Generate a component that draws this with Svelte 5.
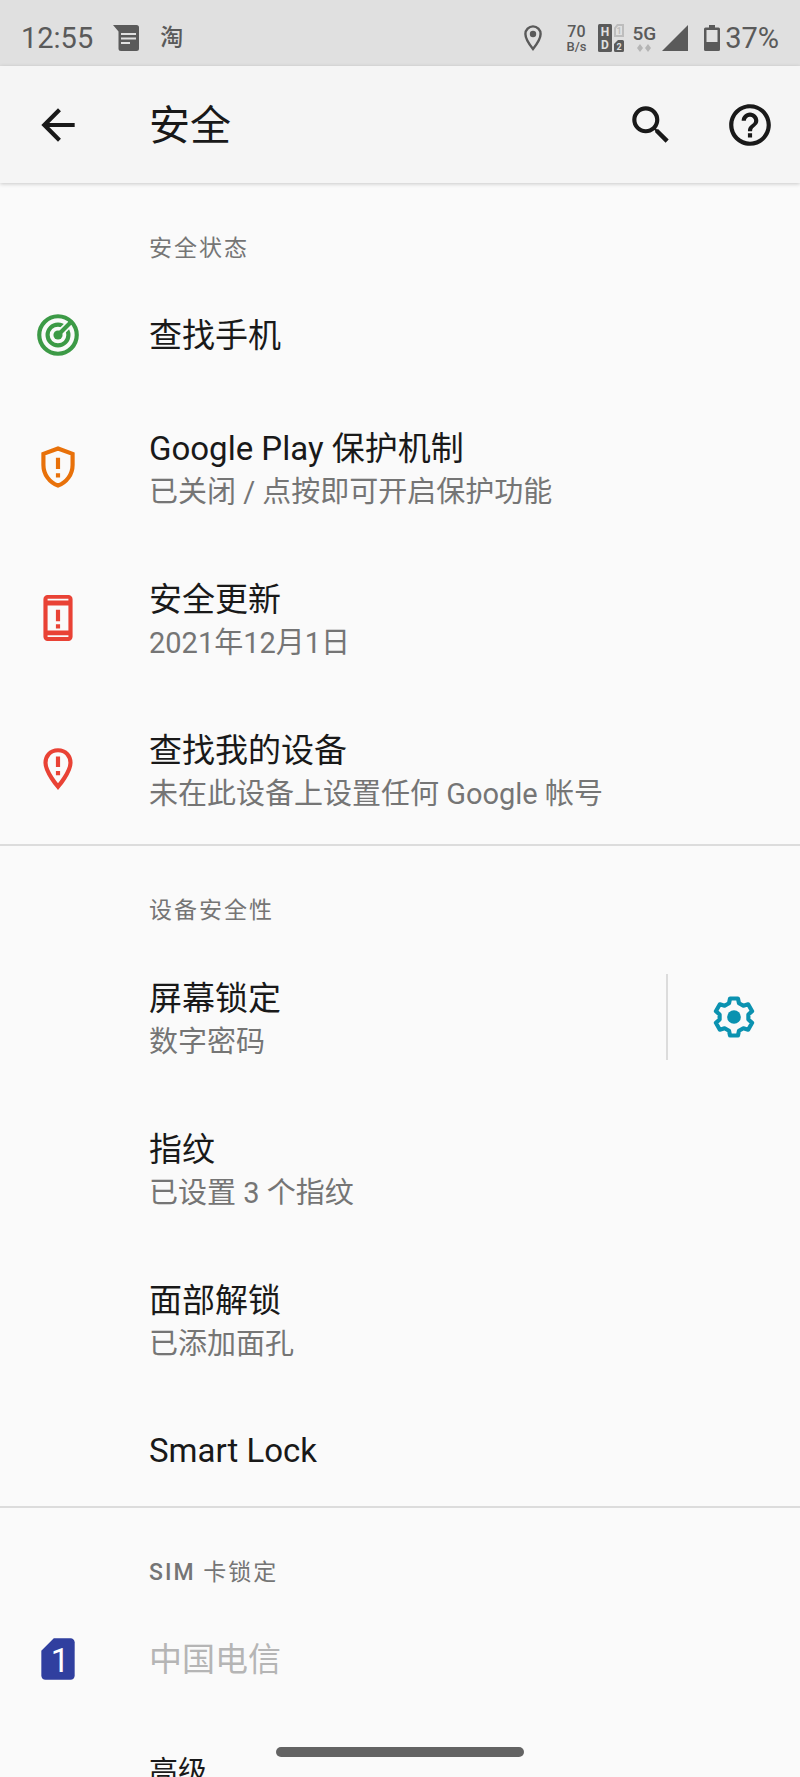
<script lang="ts">
	interface Item {
		title: string;
		summary?: string;
		icon?: string;
		disabled?: boolean;
		gear?: boolean;
		small?: boolean;
	}

	interface Section {
		prefix?: string;
		name: string;
		items: Item[];
	}

	const sections: Section[] = [
		{
			name: '安全状态',
			items: [
				{ title: '查找手机', icon: 'radar' },
				{ title: 'Google Play 保护机制', summary: '已关闭 / 点按即可开启保护功能', icon: 'shield' },
				{ title: '安全更新', summary: '2021年12月1日', icon: 'phone' },
				{ title: '查找我的设备', summary: '未在此设备上设置任何 Google 帐号', icon: 'pin' }
			]
		},
		{
			name: '设备安全性',
			items: [
				{ title: '屏幕锁定', summary: '数字密码', gear: true },
				{ title: '指纹', summary: '已设置 3 个指纹' },
				{ title: '面部解锁', summary: '已添加面孔' },
				{ title: 'Smart Lock' }
			]
		},
		{
			prefix: 'SIM',
			name: '卡锁定',
			items: [
				{ title: '中国电信', icon: 'sim', disabled: true },
				{ title: '高级', small: true }
			]
		}
	];
</script>

<div class="screen">
	<div class="status-bar">
		<span class="clock">12:55</span>
		<svg class="message" viewBox="0 0 26 26">
			<path d="M0 0h23.500a2.500 2.500 0 0 1 2.500 2.500v21a2.500 2.500 0 0 1-2.500 2.500h-15.500a2.500 2.500 0 0 1-2.500-2.500V6.500z" fill="#5a5a5a" />
			<path d="M8 9h15M8 13.500h15M8 18h9" stroke="#e0e0e0" stroke-width="2" />
		</svg>
		<span class="taobao">淘</span>

		<div class="status-right">
			<svg class="location" viewBox="0 0 18 26">
				<path d="M9 1.400a7.600 7.600 0 0 0-7.600 7.600c0 5.500 7.600 15 7.600 15s7.600-9.500 7.600-15A7.600 7.600 0 0 0 9 1.400z" fill="none" stroke="#5a5a5a" stroke-width="2.400" />
				<circle cx="9" cy="9" r="3.200" fill="#5a5a5a" />
			</svg>
			<span class="speed"><b>70</b><small>B/s</small></span>
			<svg class="hd" viewBox="0 0 26 28">
				<rect width="14" height="28" rx="1.500" fill="#5a5a5a" />
				<text x="7" y="12" font-size="12" font-weight="700" fill="#e0e0e0" text-anchor="middle">H</text>
				<text x="7" y="25" font-size="12" font-weight="700" fill="#e0e0e0" text-anchor="middle">D</text>
				<path d="M19.500 1H25v11h-8V4z" fill="none" stroke="#bdbdbd" stroke-width="2" />
				<text x="21" y="10" font-size="9" font-weight="700" fill="#bdbdbd" text-anchor="middle">1</text>
				<path d="M20 16h4.500a1.500 1.500 0 0 1 1.500 1.500v9a1.500 1.500 0 0 1-1.500 1.500h-7a1.500 1.500 0 0 1-1.500-1.500V20z" fill="#5a5a5a" />
				<text x="21" y="26" font-size="9" font-weight="700" fill="#e0e0e0" text-anchor="middle">2</text>
			</svg>
			<span class="network">
				<b>5G</b>
				<svg viewBox="0 0 14 8">
					<path d="M3 0l3 4-3 4-3-4zM11 0l3 4-3 4-3-4z" fill="#b5b5b5" />
				</svg>
			</span>
			<svg class="signal" viewBox="0 0 26 26"><path d="M26 0v26H0z" fill="#5a5a5a" /></svg>
			<svg class="battery" viewBox="0 0 16 26">
				<path d="M5 0h6v2.500h3.500A1.500 1.500 0 0 1 16 4v20.500a1.500 1.500 0 0 1-1.500 1.500h-13A1.500 1.500 0 0 1 0 24.500V4a1.500 1.500 0 0 1 1.500-1.500H5z" fill="#5a5a5a" />
				<path d="M2.500 5h11v12h-11z" fill="#e0e0e0" />
			</svg>
			<span class="percent">37%</span>
		</div>
	</div>

	<header class="toolbar">
		<button class="icon-button" aria-label="返回">
			<svg viewBox="0 0 24 24"><path d="M20 11H7.830l5.590-5.590L12 4l-8 8 8 8 1.410-1.410L7.830 13H20v-2z" /></svg>
		</button>
		<h1>安全</h1>
		<button class="icon-button" aria-label="搜索">
			<svg viewBox="0 0 24 24">
				<path d="M15.500 14h-.79l-.28-.27A6.471 6.471 0 0 0 16 9.500 6.500 6.500 0 1 0 9.500 16c1.610 0 3.090-.59 4.230-1.570l.27.28v.79l5 4.990L20.490 19l-4.990-5zm-6 0C7.010 14 5 11.990 5 9.500S7.010 5 9.500 5 14 7.010 14 9.500 11.990 14 9.500 14z" />
			</svg>
		</button>
		<button class="icon-button help" aria-label="帮助">
			<svg viewBox="0 0 24 24">
				<path d="M11 18h2v-2h-2v2zm1-16C6.480 2 2 6.480 2 12s4.480 10 10 10 10-4.480 10-10S17.520 2 12 2zm0 18c-4.410 0-8-3.590-8-8s3.590-8 8-8 8 3.590 8 8-3.590 8-8 8zm0-14c-2.210 0-4 1.790-4 4h2c0-1.100.9-2 2-2s2 .9 2 2c0 2-3 1.750-3 5h2c0-2.250 3-2.500 3-5 0-2.210-1.790-4-4-4z" />
			</svg>
		</button>
	</header>

	<main>
		{#each sections as section}
			<section>
				<h2>{#if section.prefix}<b>{section.prefix}</b>&nbsp;{/if}{section.name}</h2>
				<ul>
					{#each section.items as item}
						<li>
							<button class="row" class:two-line={item.summary} class:small={item.small} disabled={item.disabled}>
								<span class="row-icon">
									{#if item.icon === 'radar'}
										<svg viewBox="0 0 24 24" fill="none" stroke="#3c9a46" stroke-width="2">
											<circle cx="12" cy="12" r="9" />
											<circle cx="12" cy="12" r="5" />
											<path d="M12 12l5.500-5.500" stroke="#fafafa" stroke-width="3.600" />
											<path d="M12 12l6.500-6.500" />
											<circle cx="12" cy="12" r="2.200" fill="#3c9a46" stroke="none" />
										</svg>
									{:else if item.icon === 'shield'}
										<svg viewBox="0 0 24 24" fill="none" stroke="#e8710a" stroke-width="2">
											<path d="M12 3.100l7 2.600v5.300c0 4.500-2.900 8.500-7 9.900-4.100-1.400-7-5.400-7-9.900V5.700z" />
											<path d="M12 7.500v5.500M12 15v2" />
										</svg>
									{:else if item.icon === 'phone'}
										<svg viewBox="0 0 24 24">
											<path fill="#e94235" fill-rule="evenodd" d="M7 1h10a2 2 0 0 1 2 2v18a2 2 0 0 1-2 2H7a2 2 0 0 1-2-2V3a2 2 0 0 1 2-2zM7 2.800v.8h10v-.8zM7 6v12h10V6zM7 20.300v.8h10v-.8z" />
											<path fill="#e94235" d="M11 8h2v5.500h-2zM11 15h2v2h-2z" />
										</svg>
									{:else if item.icon === 'pin'}
										<svg viewBox="0 0 24 24" fill="none" stroke="#e94235" stroke-width="2">
											<path d="M12 3C8.100 3 6 5.900 6 9c0 4.500 6 11.500 6 11.500S18 13.500 18 9c0-3.100-2.100-6-6-6z" />
											<path d="M12 6v5M12 13v2" />
										</svg>
									{:else if item.icon === 'sim'}
										<svg viewBox="0 0 24 24">
											<path d="M20 4c0-1.100-.9-2-2-2h-8L4 8v12c0 1.100.9 2 2 2h12c1.100 0 2-.9 2-2z" fill="#303f9f" />
											<text x="13" y="18" font-size="16" fill="#fff" text-anchor="middle">1</text>
										</svg>
									{/if}
								</span>
								<span class="row-text">
									<span class="title">{item.title}</span>
									{#if item.summary}
										<span class="summary">{item.summary}</span>
									{/if}
								</span>
							</button>
							{#if item.gear}
								<button class="gear" aria-label="屏幕锁定设置">
									<svg viewBox="-12 -12 24 24">
										<path d="M-2.400-6.600L-1.900-8.900H1.900L2.400-6.600 4.500-5.400 6.800-6.100 8.700-2.800 6.900-1.200V1.200L8.700 2.800 6.800 6.100 4.500 5.400 2.400 6.600 1.900 8.900H-1.900L-2.400 6.600-4.500 5.400-6.800 6.100-8.700 2.800-6.900 1.200V-1.200L-8.700-2.800-6.800-6.100-4.500-5.400z" />
										<circle r="3.300" />
									</svg>
								</button>
							{/if}
						</li>
					{/each}
				</ul>
			</section>
		{/each}
	</main>

	<div class="nav-handle"></div>
</div>

<style>
	:global(body) {
		background: #fafafa;
	}

	.screen {
		position: relative;
		display: flex;
		flex-direction: column;
		height: 100vh;
		overflow: hidden;
		font-family: Roboto, 'Noto Sans CJK SC', sans-serif;
		color: #191919;
	}

	svg {
		display: block;
		flex-shrink: 0;
	}

	button {
		margin: 0;
		padding: 0;
		border: none;
		background: none;
		font: inherit;
		color: inherit;
		text-align: left;
		cursor: pointer;
	}

	.status-bar {
		display: flex;
		align-items: center;
		flex-shrink: 0;
		height: 66px;
		padding: 10px 21px 0;
		box-sizing: border-box;
		background: #e0e0e0;
		color: #5a5a5a;
	}

	.clock,
	.percent {
		font-size: 29px;
		line-height: 34px;
	}

	.message {
		width: 26px;
		height: 26px;
		margin-left: 20px;
	}

	.taobao {
		margin-left: 21px;
		font-size: 23px;
		font-weight: 500;
		line-height: 26px;
	}

	.status-right {
		display: flex;
		align-items: center;
		margin-left: auto;
	}

	.location {
		width: 18px;
		height: 26px;
		margin-right: 24px;
	}

	.speed,
	.network {
		display: flex;
		flex-direction: column;
		align-items: center;
	}

	.speed {
		margin-right: 12px;
	}

	.speed b {
		font-size: 16px;
		font-weight: 500;
		line-height: 16px;
	}

	.speed small {
		font-size: 13px;
		font-weight: 500;
		line-height: 13px;
	}

	.hd {
		width: 26px;
		height: 28px;
		margin-right: 8px;
	}

	.network b {
		font-size: 19px;
		font-weight: 500;
		line-height: 20px;
	}

	.network svg {
		width: 14px;
		height: 8px;
	}

	.signal {
		width: 26px;
		height: 26px;
		margin: 0 16px 0 6px;
	}

	.battery {
		width: 16px;
		height: 26px;
		margin-right: 5px;
	}

	.toolbar {
		position: relative;
		display: flex;
		align-items: center;
		flex-shrink: 0;
		height: 117px;
		padding: 0 25px 0 33px;
		box-sizing: border-box;
		background: #f5f5f5;
		box-shadow: 0 1px 4px rgba(0, 0, 0, 0.2);
	}

	.toolbar h1 {
		flex: 1;
		margin: 0 0 0 66px;
		padding-top: 2px;
		font-size: 41px;
		font-weight: 400;
		line-height: 48px;
	}

	.icon-button svg,
	.row-icon svg,
	.gear svg {
		width: 50px;
		height: 50px;
	}

	.icon-button svg {
		fill: #191919;
	}

	.help {
		margin-left: 49px;
	}

	main {
		flex: 1;
		min-height: 0;
		overflow-y: auto;
		scrollbar-width: none;
	}

	section + section {
		border-top: 2px solid #dcdcdc;
	}

	h2 {
		margin: 0;
		padding: 51px 33px 15px 149px;
		color: #757575;
		font-size: 23px;
		font-weight: 400;
		line-height: 30px;
		letter-spacing: 2px;
	}

	h2 b {
		font-weight: 500;
	}

	section + section h2 {
		padding-top: 50px;
	}

	ul {
		margin: 0;
		padding: 0;
		list-style: none;
	}

	li {
		display: flex;
		align-items: center;
	}

	.row {
		display: flex;
		flex: 1;
		align-items: center;
		min-height: 112px;
		padding: 0 33px;
	}

	.row.two-line {
		min-height: 151px;
	}

	.row:disabled {
		color: #b5b5b5;
		cursor: default;
	}

	.row-icon {
		flex-shrink: 0;
		width: 116px;
	}

	.row-text {
		padding-top: 2px;
	}

	.two-line .row-text {
		padding-top: 7px;
	}

	.title,
	.summary {
		display: block;
	}

	.title {
		font-size: 33px;
		line-height: 44px;
	}

	.small .title {
		font-size: 29px;
	}

	.summary {
		color: #757575;
		font-size: 29px;
		line-height: 43px;
	}

	.gear {
		display: flex;
		justify-content: center;
		align-items: center;
		width: 134px;
		height: 86px;
		border-left: 2px solid #dcdcdc;
	}

	.gear path {
		fill: none;
		stroke: #0b92b0;
		stroke-width: 2;
		stroke-linejoin: round;
	}

	.gear circle {
		fill: #0b92b0;
	}

	.nav-handle {
		position: absolute;
		bottom: 20px;
		left: 50%;
		width: 31%;
		height: 10px;
		border-radius: 5px;
		background: #636363;
		transform: translateX(-50%);
	}
</style>
